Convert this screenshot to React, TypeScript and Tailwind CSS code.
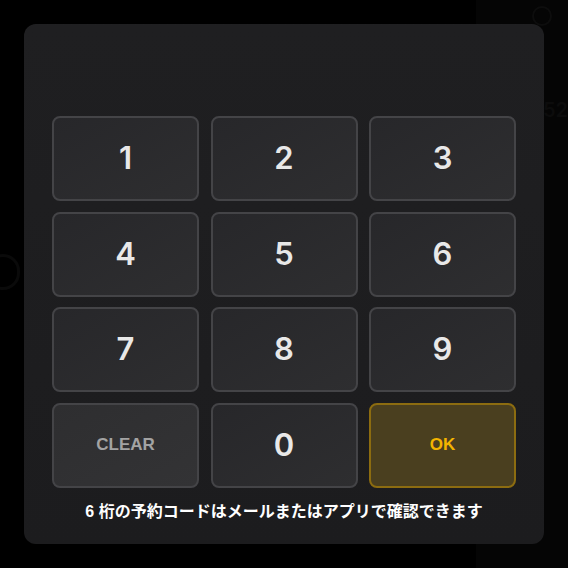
import React from "react";

const KEYS = ["1", "2", "3", "4", "5", "6", "7", "8", "9"];

function Key({ label }: { label: string }) {
  return (
    <button className="h-[85px] rounded-lg border-2 border-[#444447] bg-gradient-to-br from-[#27272a] to-[#2e2e30] flex items-center justify-center text-[31px] font-semibold text-[#e8e8e8] font-['Inter',sans-serif]">
      {label}
    </button>
  );
}

export default function App() {
  return (
    <div className="relative w-[568px] h-[568px] bg-black overflow-hidden">
      {/* faint page behind the overlay */}
      <div className="absolute right-0 top-0 w-[92px] h-full bg-[#050505]" />
      <div className="absolute left-[-14px] top-[254px] w-[34px] h-[36px] rounded-full border-[3px] border-[#0a0a0a]" />
      <div className="absolute left-[543px] top-[95px] text-[20px] font-semibold text-[#0c0c0c] font-['Inter',sans-serif]">
        52
      </div>
      <div className="absolute left-[532px] top-[6px] w-[20px] h-[20px] rounded-full border-2 border-[#0d0d0d]" />

      <div className="relative p-6 w-full h-full">
        <div className="w-[520px] h-[520px] rounded-xl bg-gradient-to-b from-[#1f1f21] to-[#1c1c1e] px-7 pt-[92px]">
          <div className="grid grid-cols-3 gap-x-[11.5px] gap-y-[10.5px]">
            {KEYS.map((k) => (
              <Key key={k} label={k} />
            ))}
            <button className="h-[85px] rounded-lg border-2 border-[#444447] bg-gradient-to-br from-[#2e2e30] to-[#333335] flex items-center justify-center text-[17px] font-bold text-[#a3a3a3] font-['Liberation_Sans',sans-serif]">
              CLEAR
            </button>
            <Key label="0" />
            <button className="h-[85px] rounded-lg border-2 border-[#8c6c10] bg-[#4a3f1f] flex items-center justify-center text-[17px] font-bold text-[#f4b400] font-['Liberation_Sans',sans-serif]">
              OK
            </button>
          </div>
          <p className="mt-[12px] text-center text-[16px] leading-6 font-bold text-white font-['Liberation_Sans','Noto_Sans_CJK_JP',sans-serif]">
            6 桁の予約コードはメールまたはアプリで確認できます
          </p>
        </div>
      </div>
    </div>
  );
}
